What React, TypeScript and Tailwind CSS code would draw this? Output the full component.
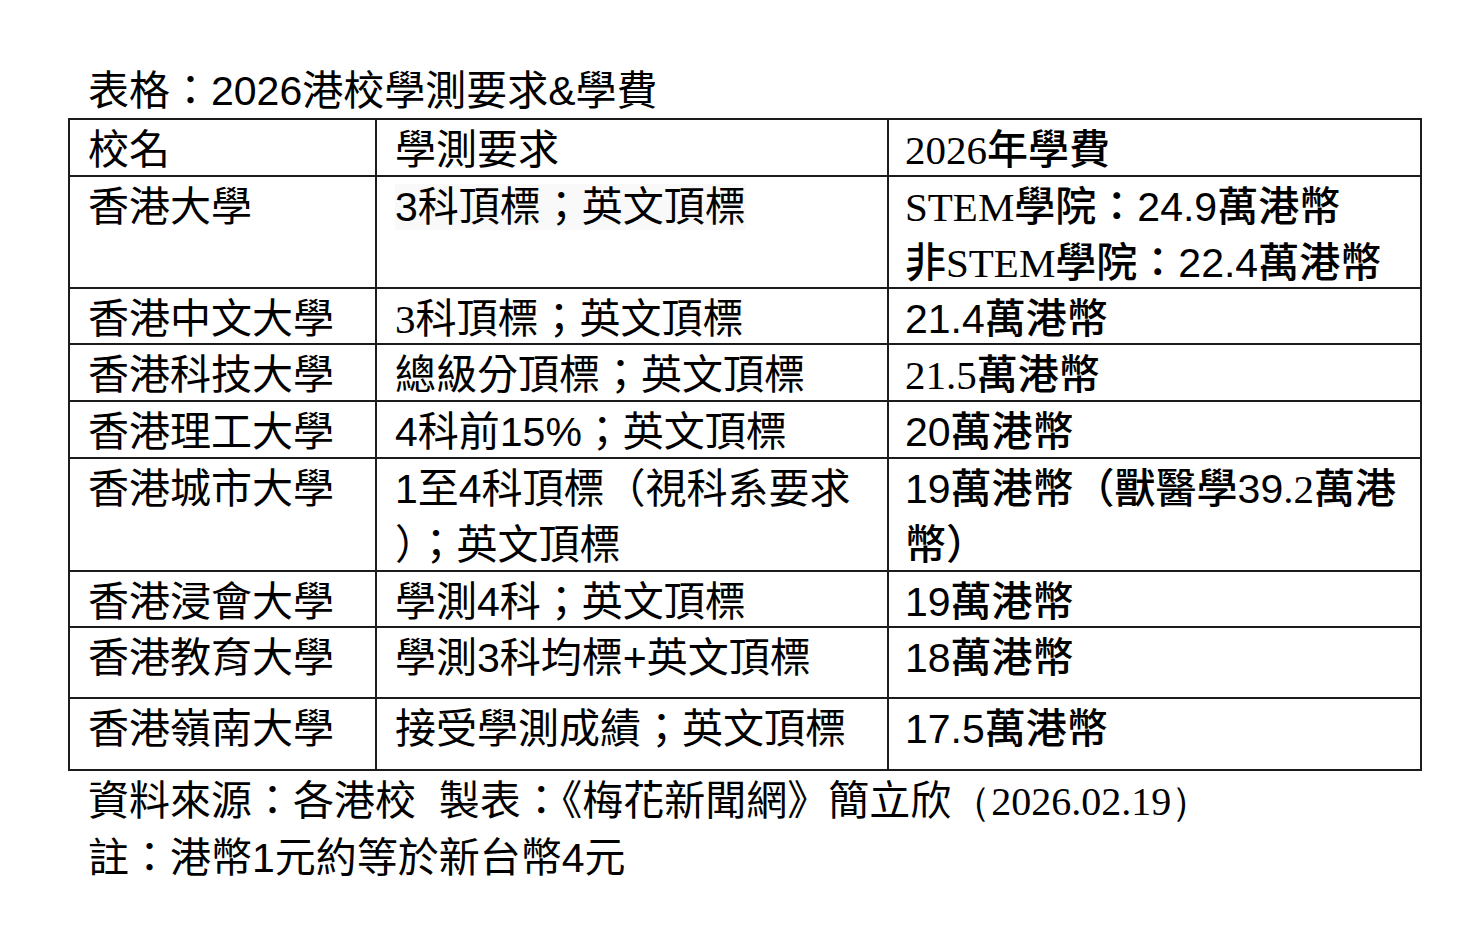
const sans = "font-['Liberation_Sans','Noto_Sans_CJK_TC',sans-serif]";

function Serif({ children }: { children: React.ReactNode }) {
  return <span className="font-['Liberation_Serif','Noto_Sans_CJK_TC',serif]">{children}</span>;
}

const cell = "border-l-2 border-t-2 border-[#1c1c1c] pt-[2px] leading-[56px] overflow-hidden";

const rows: { h: string; name: string; req: React.ReactNode; fee: React.ReactNode }[] = [
  {
    h: "h-[112px]",
    name: "香港大學",
    req: <span className="bg-[#f9f9f9]">3科頂標；英文頂標</span>,
    fee: (
      <>
        <Serif>STEM</Serif>學院：24.9萬港幣
        <br />
        非<Serif>STEM</Serif>學院：22.4萬港幣
      </>
    ),
  },
  {
    h: "h-[56px]",
    name: "香港中文大學",
    req: (
      <>
        <Serif>3</Serif>科頂標；英文頂標
      </>
    ),
    fee: "21.4萬港幣",
  },
  {
    h: "h-[57px]",
    name: "香港科技大學",
    req: "總級分頂標；英文頂標",
    fee: (
      <>
        <Serif>21.5</Serif>萬港幣
      </>
    ),
  },
  { h: "h-[57px]", name: "香港理工大學", req: "4科前15%；英文頂標", fee: "20萬港幣" },
  {
    h: "h-[113px]",
    name: "香港城市大學",
    req: (
      <>
        1至4科頂標（視科系要求
        <br />
        ）；英文頂標
      </>
    ),
    fee: (
      <>
        19萬港幣（獸醫學39<Serif>.2</Serif>萬港
        <br />
        幣）
      </>
    ),
  },
  { h: "h-[56px]", name: "香港浸會大學", req: "學測4科；英文頂標", fee: "19萬港幣" },
  { h: "h-[71px]", name: "香港教育大學", req: "學測3科均標+英文頂標", fee: "18萬港幣" },
  { h: "h-[72px]", name: "香港嶺南大學", req: "接受學測成績；英文頂標", fee: "17.5萬港幣" },
];

export default function App() {
  return (
    <div className={`min-h-screen bg-white text-black ${sans} text-[41px] pt-[65px] pl-[68px]`}>
      <div className="pl-[20px] leading-[53px] whitespace-nowrap">表格：2026港校學測要求&amp;學費</div>

      <div className="grid grid-cols-[307px_512px_533px] w-[1354px] border-r-2 border-b-2 border-[#1c1c1c]">
        <div className={`${cell} h-[57px] pl-[18px]`}>校名</div>
        <div className={`${cell} h-[57px] pl-[18px]`}>學測要求</div>
        <div className={`${cell} h-[57px] pl-[16px] font-medium`}>
          <Serif>2026</Serif>年學費
        </div>
        {rows.map((r) => (
          <div key={r.name} className="contents">
            <div className={`${cell} ${r.h} pl-[18px] whitespace-nowrap`}>{r.name}</div>
            <div className={`${cell} ${r.h} pl-[18px] whitespace-nowrap`}>{r.req}</div>
            <div className={`${cell} ${r.h} pl-[16px] font-medium whitespace-nowrap`}>{r.fee}</div>
          </div>
        ))}
      </div>

      <div className="pl-[20px] leading-[56px] mt-[2px] whitespace-nowrap">
        資料來源：各港校&nbsp;&nbsp;製表：《梅花新聞網》簡立欣
        <span className="font-['Liberation_Serif',serif] text-[40px]">（2026.02.19）</span>
      </div>
      <div className="pl-[20px] leading-[56px]">註：港幣1元約等於新台幣4元</div>
    </div>
  );
}
